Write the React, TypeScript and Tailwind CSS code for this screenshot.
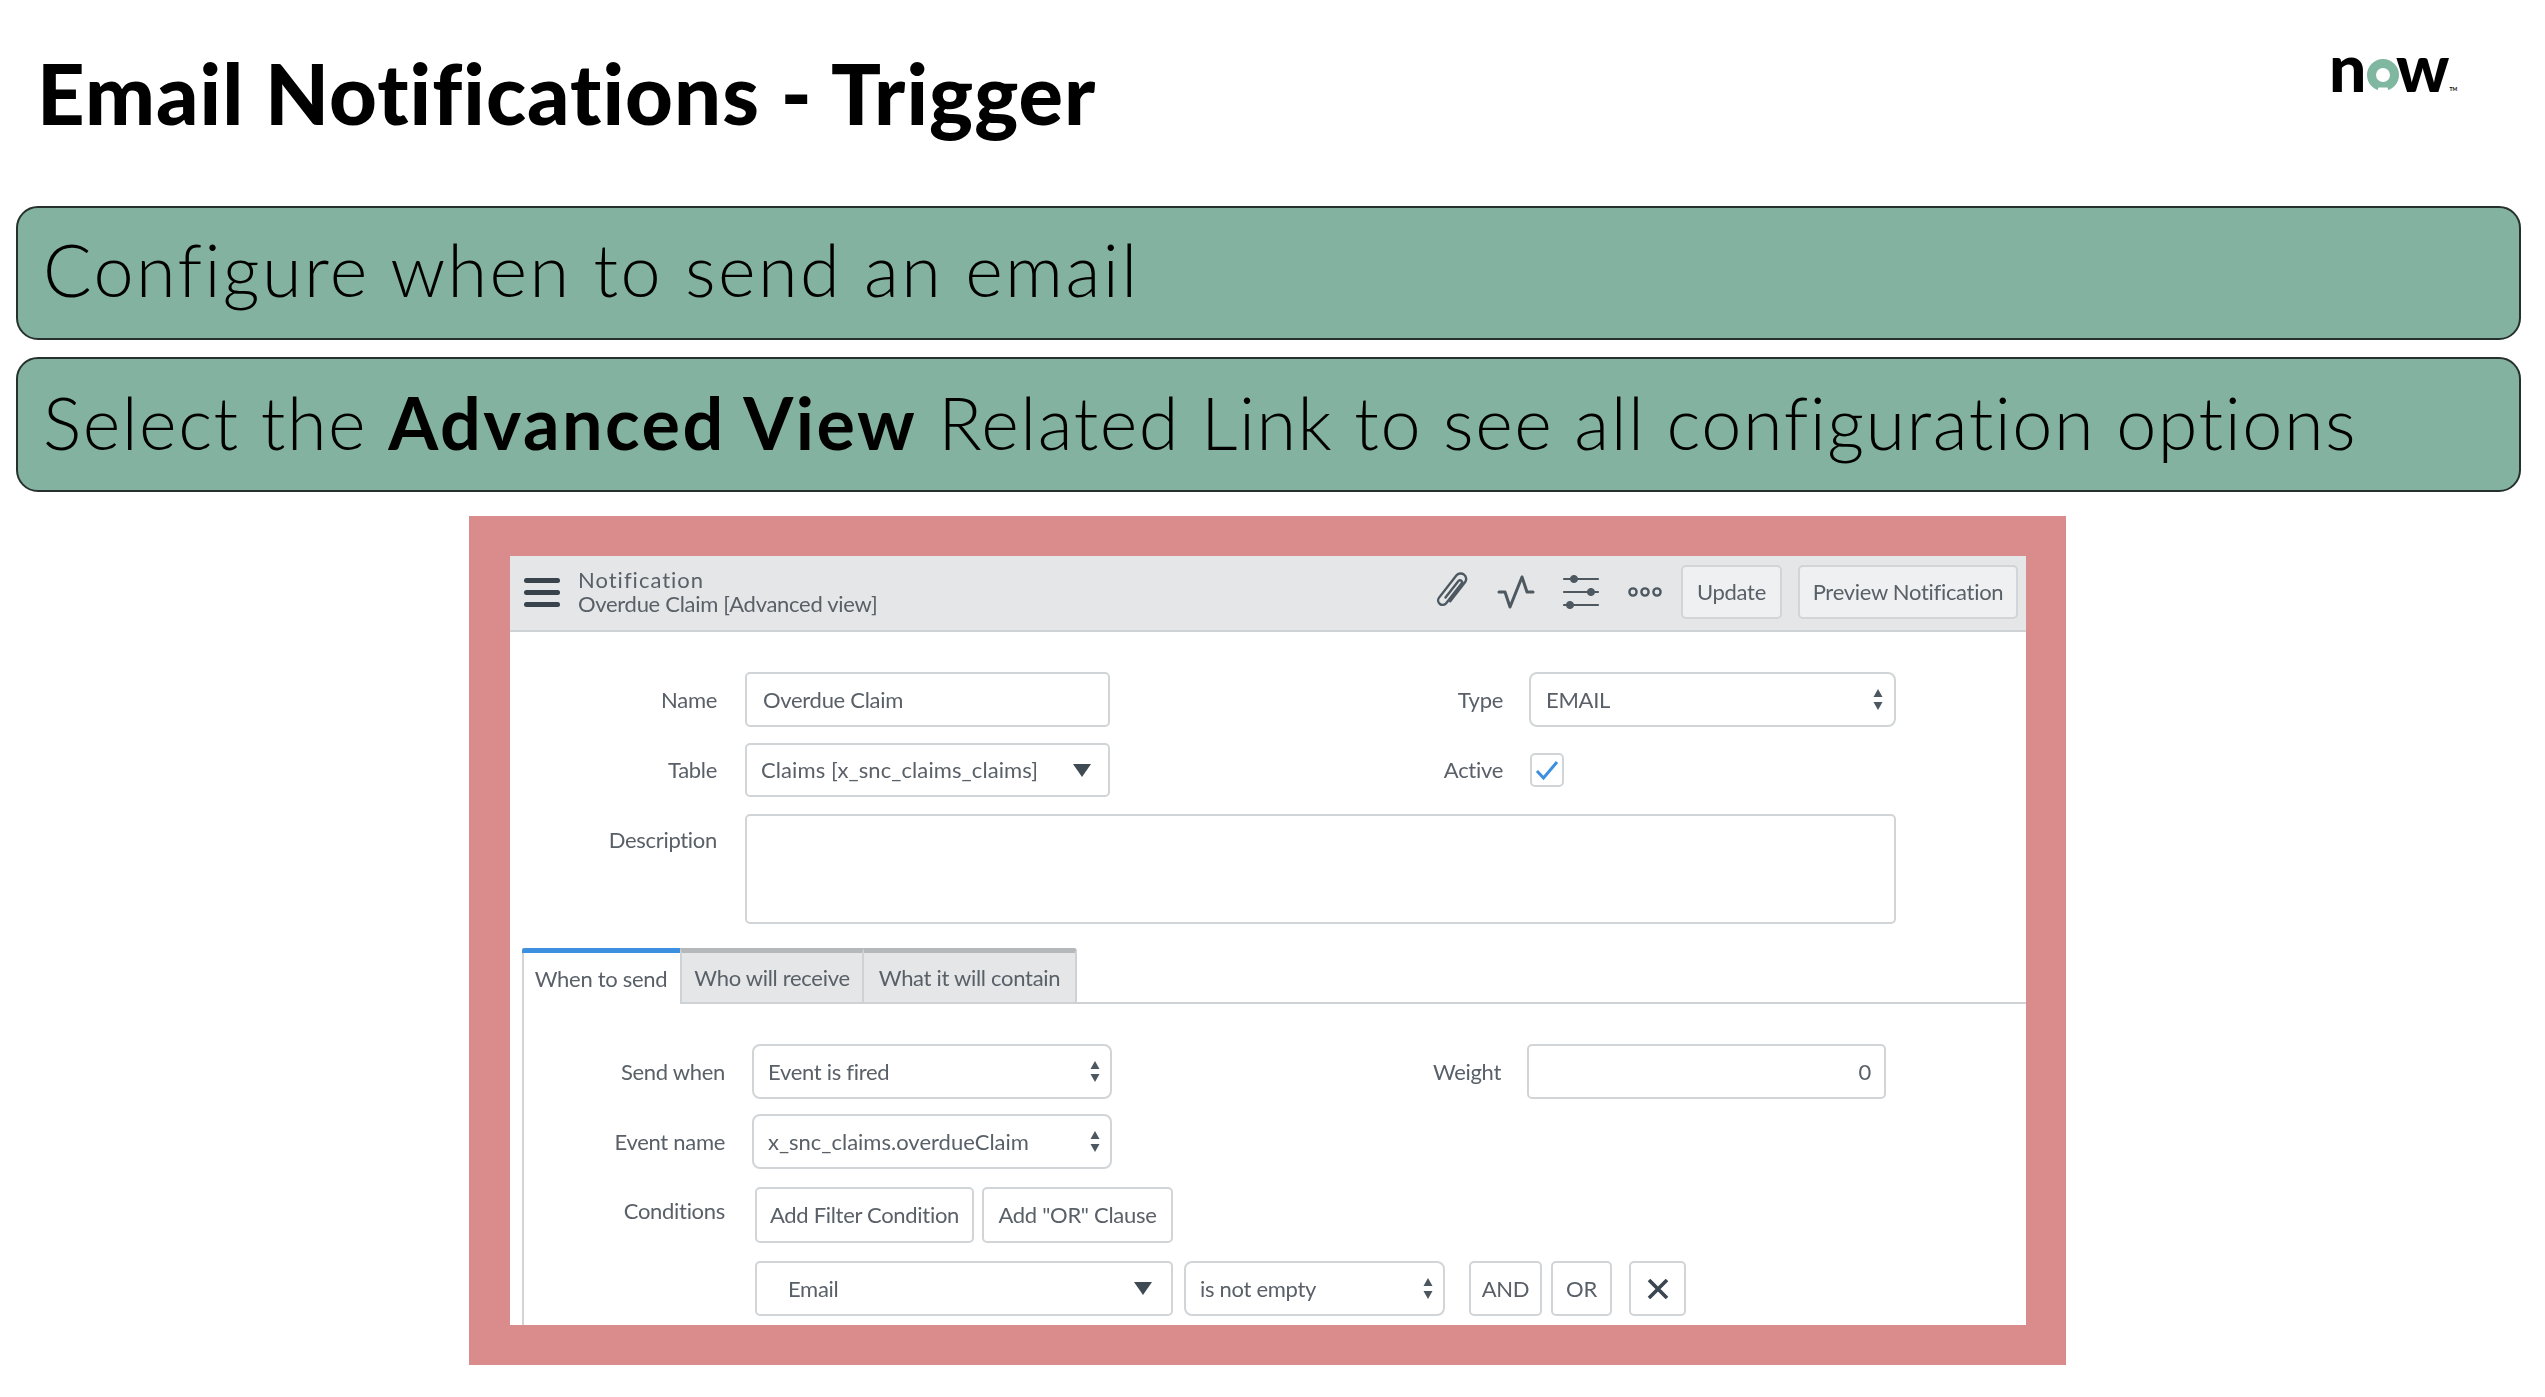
import type { ReactNode } from "react";

const fieldText = "text-[22px] leading-none tracking-[-0.3px] text-[#596068]";

function UpDown() {
  return (
    <svg width="10" height="21" viewBox="0 0 10 21" className="shrink-0 text-[#4d5760]">
      <path d="M5 0 L9.5 8 H0.5 Z M0.5 13 H9.5 L5 21 Z" fill="currentColor" />
    </svg>
  );
}

function DownTriangle() {
  return (
    <svg width="18" height="13" viewBox="0 0 18 13" className="shrink-0 text-[#3f4a52]">
      <path d="M0 0 H18 L9 13 Z" fill="currentColor" />
    </svg>
  );
}

function Label({ width, children }: { width: string; children: ReactNode }) {
  return <div className={`${width} shrink-0 text-right ${fieldText}`}>{children}</div>;
}

function ToolIcon({ children }: { children: ReactNode }) {
  return (
    <svg width="40" height="40" viewBox="0 0 40 40" fill="none" stroke="#4d5861" strokeLinecap="round" strokeLinejoin="round">
      {children}
    </svg>
  );
}

function NowLogo() {
  return (
    <div className="flex items-end w-[122px] h-[33px] mt-[59px] mr-[91px] font-['Lato',sans-serif] font-black text-black text-[66px] leading-[50px]">
      <span className="-ml-[3px] w-[38px] shrink-0">n</span>
      <svg width="32" height="33" viewBox="0 0 32 33" className="shrink-0">
        <circle cx="16" cy="16" r="11.5" fill="none" stroke="#7fb7a1" strokeWidth="9" />
        <path d="M10 33 L11.5 28.5 H20.5 L22 33 Z" fill="#fff" />
      </svg>
      <span className="-ml-[3px] shrink-0">w</span>
      <span className="shrink-0 text-[5px] leading-none font-bold">TM</span>
    </div>
  );
}

export default function App() {
  return (
    <div className="w-[2545px] h-[1397px] bg-white overflow-hidden font-['Lato',sans-serif] text-black">
      {/* Title */}
      <div className="h-[206px] flex justify-between items-start">
        <h1 className="ml-[37px] mt-[47px] text-[83px] leading-[92px] font-black tracking-[1.05px]">
          Email Notifications - Trigger
        </h1>
        <NowLogo />
      </div>

      {/* Green callouts */}
      <div className="ml-[16px] w-[2505px] flex flex-col gap-[17px]">
        <div className="h-[134px] rounded-[22px] border-2 border-[#26302c] bg-[#83b3a0] pl-[25px] flex items-center">
          <span className="text-[72px] leading-none font-light tracking-[2.4px] -mt-[8px]">Configure when to send an email</span>
        </div>
        <div className="h-[135px] rounded-[22px] border-2 border-[#26302c] bg-[#83b3a0] pl-[25px] flex items-center">
          <span className="text-[72px] leading-none font-light tracking-[1.5px] -mt-[6px]">
            Select the <b className="font-bold tracking-[2.5px]">Advanced View</b> Related Link to see all configuration options
          </span>
        </div>
      </div>

      {/* Screenshot panel */}
      <div className="mt-[24px] ml-[469px] w-[1597px] h-[849px] bg-[#da8c8c] pt-[40px] pl-[41px] pr-[40px]">
        <div className="h-[769px] bg-white overflow-hidden blur-[0.6px]">
          {/* Form header */}
          <div className="h-[76px] bg-[#e4e6e7] border-b-2 border-[#cfd2d4] flex items-center pl-[14px] pr-[8px] pb-[2px]">
            <div className="w-[36px] flex flex-col gap-[7px]">
              <div className="h-[5px] rounded-full bg-[#39434c]" />
              <div className="h-[5px] rounded-full bg-[#39434c]" />
              <div className="h-[5px] rounded-full bg-[#39434c]" />
            </div>
            <div className="ml-[18px] text-[#596068] text-[22px] leading-[24px]">
              <div className="tracking-[1px]">Notification</div>
              <div className="tracking-[-0.3px]">Overdue Claim [Advanced view]</div>
            </div>
            <div className="ml-auto flex items-center gap-[24px]">
              <ToolIcon>
                <g transform="translate(20 20) rotate(38)" strokeWidth="2.4">
                  <path d="M3.5 9 V-15 A5.5 5.5 0 0 0 -7.5 -15 V13 A4.5 4.5 0 0 0 1.5 13 V-12 A2 2 0 0 0 -2.5 -12 V9" />
                </g>
              </ToolIcon>
              <ToolIcon>
                <path d="M2 20 H8 L13 35 L25 5 L30 20 H36" strokeWidth="3" />
              </ToolIcon>
              <ToolIcon>
                <path d="M3 7 H37 M3 20 H37 M3 33 H37" strokeWidth="2.2" />
                <circle cx="13" cy="7" r="3.6" fill="#4d5861" />
                <circle cx="30" cy="20" r="3.6" fill="#4d5861" />
                <circle cx="9" cy="33" r="3.6" fill="#4d5861" />
              </ToolIcon>
              <ToolIcon>
                <circle cx="8" cy="20" r="3.6" strokeWidth="2.4" />
                <circle cx="20" cy="20" r="3.6" strokeWidth="2.4" />
                <circle cx="32" cy="20" r="3.6" strokeWidth="2.4" />
              </ToolIcon>
            </div>
            <div className={`ml-[16px] w-[101px] h-[54px] rounded-[5px] border-2 border-[#d2d5d7] bg-[#eff0f1] flex items-center justify-center ${fieldText}`}>
              Update
            </div>
            <div className={`ml-[16px] w-[220px] h-[54px] rounded-[5px] border-2 border-[#d2d5d7] bg-[#eff0f1] flex items-center justify-center ${fieldText}`}>
              Preview Notification
            </div>
          </div>

          {/* Top fields */}
          <div className="pt-[40px] flex items-center h-[95px]">
            <Label width="w-[207px]">Name</Label>
            <div className={`ml-[28px] w-[365px] h-[55px] rounded-[5px] border-2 border-[#d2d5d7] flex items-center pl-[16px] ${fieldText}`}>
              Overdue Claim
            </div>
            <Label width="w-[393px]">Type</Label>
            <div className={`ml-[26px] w-[367px] h-[55px] rounded-[8px] border-2 border-[#d2d5d7] flex items-center justify-between pl-[15px] pr-[11px] ${fieldText}`}>
              EMAIL
              <UpDown />
            </div>
          </div>
          <div className="mt-[16px] flex items-center h-[54px]">
            <Label width="w-[207px]">Table</Label>
            <div className={`ml-[28px] w-[365px] h-[54px] rounded-[5px] border-2 border-[#d2d5d7] flex items-center justify-between pl-[14px] pr-[17px] ${fieldText}`}>
              <span className="tracking-[0.1px]">Claims [x_snc_claims_claims]</span>
              <DownTriangle />
            </div>
            <Label width="w-[393px]">Active</Label>
            <div className="ml-[27px] w-[34px] h-[34px] rounded-[5px] border-2 border-[#d2d5d7] flex items-center justify-center">
              <svg width="24" height="20" viewBox="0 0 24 20" fill="none">
                <path d="M2 11 L8.5 18 L22 2" stroke="#3d8fe0" strokeWidth="3" />
              </svg>
            </div>
          </div>
          <div className="mt-[17px] flex items-start">
            <div className="pt-[15px]">
              <Label width="w-[207px]">Description</Label>
            </div>
            <div className="ml-[28px] w-[1151px] h-[110px] rounded-[5px] border-2 border-[#d2d5d7]" />
          </div>

          {/* Tabs */}
          <div className="mt-[24px] ml-[12px] h-[377px] border-l-2 border-[#d2d5d7]">
            <div className="flex h-[56px] -ml-[2px]">
              <div className={`w-[158px] border-t-[5px] border-[#3d8fe0] rounded-tl-[3px] flex items-center justify-center ${fieldText}`}>
                When to send
              </div>
              <div className={`w-[184px] border-t-[5px] border-t-[#b5b8ba] border-b-2 border-b-[#cfd2d4] border-r-2 border-r-[#cfd2d4] border-l-2 border-l-[#cfd2d4] bg-[#e4e6e7] flex items-center justify-center ${fieldText}`}>
                Who will receive
              </div>
              <div className={`w-[213px] rounded-tr-[3px] border-t-[5px] border-t-[#b5b8ba] border-b-2 border-b-[#cfd2d4] border-r-2 border-r-[#cfd2d4] bg-[#e4e6e7] flex items-center justify-center ${fieldText}`}>
                What it will contain
              </div>
              <div className="flex-1 border-b-2 border-[#cfd2d4]" />
            </div>

            <div className="pt-[40px]">
              <div className="flex items-center h-[55px]">
                <Label width="w-[201px]">Send when</Label>
                <div className={`ml-[27px] w-[360px] h-[55px] rounded-[8px] border-2 border-[#d2d5d7] flex items-center justify-between pl-[14px] pr-[10px] ${fieldText}`}>
                  Event is fired
                  <UpDown />
                </div>
                <Label width="w-[389px]">Weight</Label>
                <div className={`ml-[26px] w-[359px] h-[55px] rounded-[5px] border-2 border-[#d2d5d7] flex items-center justify-end pr-[13px] ${fieldText}`}>
                  0
                </div>
              </div>
              <div className="mt-[15px] flex items-center h-[55px]">
                <Label width="w-[201px]">Event name</Label>
                <div className={`ml-[27px] w-[360px] h-[55px] rounded-[8px] border-2 border-[#d2d5d7] flex items-center justify-between pl-[14px] pr-[10px] ${fieldText}`}>
                  <span className="tracking-normal">x_snc_claims.overdueClaim</span>
                  <UpDown />
                </div>
              </div>
              <div className="mt-[18px] flex items-start">
                <div className="pt-[13px]">
                  <Label width="w-[201px]">Conditions</Label>
                </div>
                <div className={`ml-[30px] w-[219px] h-[56px] rounded-[5px] border-2 border-[#d2d5d7] flex items-center justify-center ${fieldText}`}>
                  Add Filter Condition
                </div>
                <div className={`ml-[8px] w-[191px] h-[56px] rounded-[5px] border-2 border-[#d2d5d7] flex items-center justify-center ${fieldText}`}>
                  Add "OR" Clause
                </div>
              </div>
              <div className="mt-[18px] ml-[231px] flex items-center h-[55px]">
                <div className={`w-[418px] h-[55px] rounded-[5px] border-2 border-[#d2d5d7] flex items-center justify-between pl-[31px] pr-[19px] ${fieldText}`}>
                  Email
                  <DownTriangle />
                </div>
                <div className={`ml-[11px] w-[261px] h-[55px] rounded-[8px] border-2 border-[#d2d5d7] flex items-center justify-between pl-[14px] pr-[10px] ${fieldText}`}>
                  is not empty
                  <UpDown />
                </div>
                <div className={`ml-[24px] w-[73px] h-[55px] rounded-[5px] border-2 border-[#d2d5d7] flex items-center justify-center ${fieldText}`}>
                  AND
                </div>
                <div className={`ml-[9px] w-[61px] h-[55px] rounded-[5px] border-2 border-[#d2d5d7] flex items-center justify-center ${fieldText}`}>
                  OR
                </div>
                <div className="ml-[17px] w-[57px] h-[55px] rounded-[5px] border-2 border-[#d2d5d7] flex items-center justify-center">
                  <svg width="22" height="20" viewBox="0 0 22 20" fill="none">
                    <path d="M2 1 L20 19 M20 1 L2 19" stroke="#3c4650" strokeWidth="3.6" />
                  </svg>
                </div>
              </div>
            </div>
          </div>
        </div>
      </div>
    </div>
  );
}
